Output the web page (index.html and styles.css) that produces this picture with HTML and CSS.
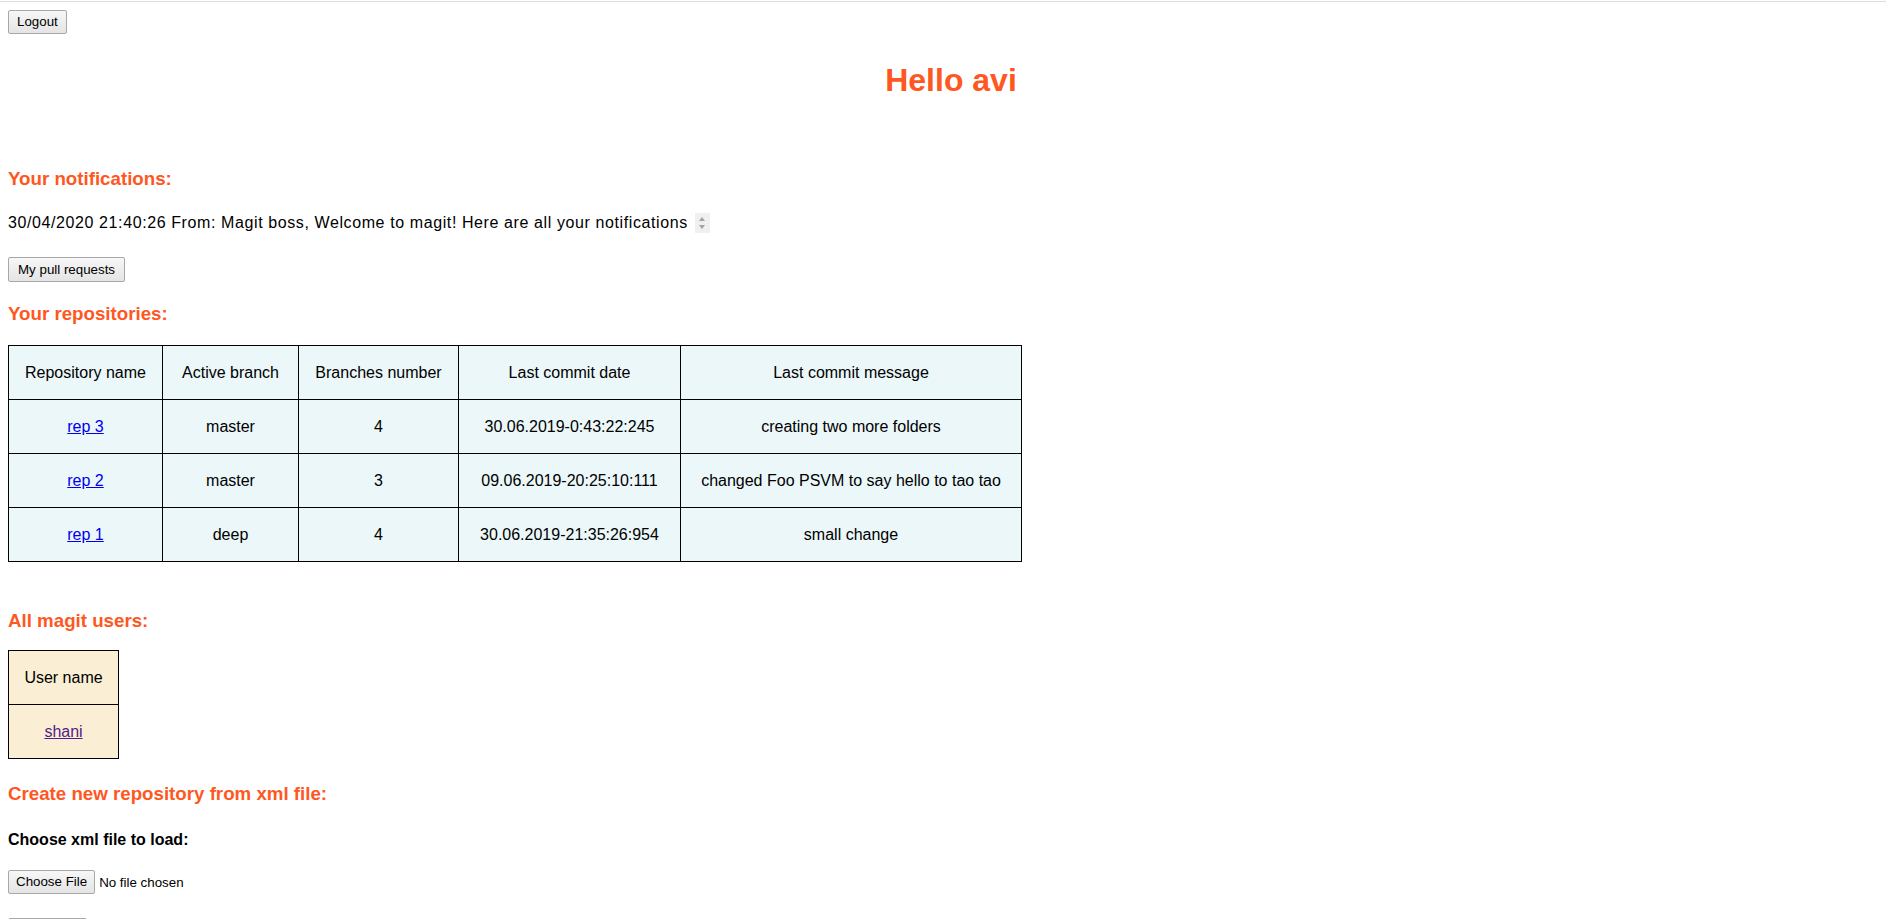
FILE: index.html
```html
<!DOCTYPE html>
<html lang="en">
<head>
<meta charset="utf-8">
<title>Magit</title>
<link rel="stylesheet" href="styles.css">
</head>
<body>
<div class="topline"></div>
<main class="page">
  <div class="row-logout"><button class="btn btn-logout" type="button">Logout</button></div>
  <h1 class="title">Hello avi</h1>

  <h3 class="section notif-title">Your notifications:</h3>
  <div class="notif">
    <span class="notif-text">30/04/2020 21:40:26 From: Magit boss, Welcome to magit! Here are all your notifications</span>
    <span class="spin"><span class="tri up"></span><span class="tri down"></span></span>
  </div>
  <div class="row-pr"><button class="btn btn-comic" type="button">My pull requests</button></div>

  <h3 class="section repos-title">Your repositories:</h3>
  <table class="grid repos">
    <colgroup>
      <col class="c1"><col class="c2"><col class="c3"><col class="c4"><col class="c5">
    </colgroup>
    <thead>
      <tr><th>Repository name</th><th>Active branch</th><th>Branches number</th><th>Last commit date</th><th>Last commit message</th></tr>
    </thead>
    <tbody>
      <tr><td><a href="#" class="lnk">rep 3</a></td><td>master</td><td>4</td><td>30.06.2019-0:43:22:245</td><td>creating two more folders</td></tr>
      <tr><td><a href="#" class="lnk">rep 2</a></td><td>master</td><td>3</td><td>09.06.2019-20:25:10:111</td><td>changed Foo PSVM to say hello to tao tao</td></tr>
      <tr><td><a href="#" class="lnk">rep 1</a></td><td>deep</td><td>4</td><td>30.06.2019-21:35:26:954</td><td>small change</td></tr>
    </tbody>
  </table>

  <h3 class="section users-title">All magit users:</h3>
  <table class="grid users">
    <thead><tr><th>User name</th></tr></thead>
    <tbody><tr><td><a href="#" class="lnk visited">shani</a></td></tr></tbody>
  </table>

  <h3 class="section create-title">Create new repository from xml file:</h3>
  <h4 class="sub">Choose xml file to load:</h4>
  <div class="file-row">
    <button class="btn" type="button">Choose File</button><span class="file-none">No file chosen</span>
  </div>
  <div class="row-upload"><button class="btn" type="button">Upload file</button></div>
</main>
</body>
</html>
```
FILE: styles.css
```css
html, body {
  margin: 0;
  padding: 0;
  background: #ffffff;
}
body {
  padding-top: 1px;
  font-family: "Liberation Sans", Arial, sans-serif;
  font-size: 16px;
  color: #000;
  overflow: hidden;
}
.topline {
  border-top: 1px solid #dcdcdc;
}
.page {
  padding: 0 8px;
}
.btn {
  font-family: "Liberation Sans", Arial, sans-serif;
  font-size: 13.333px;
  color: #000;
  height: 24px;
  padding: 0 7px;
  border: 1px solid #a8a8a8;
  border-radius: 2px;
  background: linear-gradient(#f7f7f7, #e4e4e4);
  line-height: 20px;
  margin: 0;
  cursor: default;
}
.btn-logout {
  padding: 0 8px;
}
.btn-comic {
  height: 25px;
  padding: 0 9px;
}
.row-logout {
  margin-top: 8px;
  height: 24px;
}
.title {
  margin: 24px 0 0;
  padding-left: 16px;
  font-size: 32px;
  line-height: 44px;
  text-align: center;
  color: #ff5722;
  font-weight: bold;
}
.section {
  margin: 0;
  font-size: 18.72px;
  line-height: 22px;
  font-weight: bold;
  color: #ff5722;
}
.notif-title { margin-top: 66px; }
.notif {
  margin-top: 22px;
  line-height: 22px;
  display: flex;
  align-items: center;
}
.notif-text {
  letter-spacing: 0.6px;
}
.spin {
  margin-left: 7px;
  width: 15px;
  height: 20px;
  background: #f0f0f0;
  display: inline-flex;
  flex-direction: column;
  align-items: center;
  justify-content: center;
  gap: 4px;
}
.tri {
  width: 0;
  height: 0;
  border-left: 3.5px solid transparent;
  border-right: 3.5px solid transparent;
}
.tri.up { border-bottom: 4px solid #a3a3a3; }
.tri.down { border-top: 4px solid #a3a3a3; }
.row-pr {
  margin-top: 23px;
  height: 25px;
}
.repos-title { margin-top: 21px; }
.grid {
  border-collapse: collapse;
  border: 1px solid #000;
  line-height: 23px;
}
.grid th, .grid td {
  border: 1px solid #000;
  padding: 15px;
  text-align: center;
  vertical-align: middle;
  font-weight: normal;
  white-space: nowrap;
}
.repos {
  margin-top: 20px;
  table-layout: fixed;
  width: 1013px;
  background: #ebf7f9;
}
.c1 { width: 154px; }
.c2 { width: 136px; }
.c3 { width: 160px; }
.c4 { width: 222px; }
.c5 { width: 341px; }
.users-title { margin-top: 48px; }
.users {
  margin-top: 18px;
  width: 111px;
  background: #faefd4;
}
.lnk { color: #0000ee; text-decoration: underline; }
.lnk.visited { color: #551a8b; }
.create-title { margin-top: 24px; }
.sub {
  margin: 24px 0 0;
  font-size: 16px;
  line-height: 22px;
  font-weight: bold;
}
.file-row {
  margin-top: 19px;
  height: 24px;
  display: flex;
  align-items: center;
}
.file-none {
  margin-left: 4px;
  font-size: 13.333px;
}
.row-upload {
  margin-top: 24px;
}
```
